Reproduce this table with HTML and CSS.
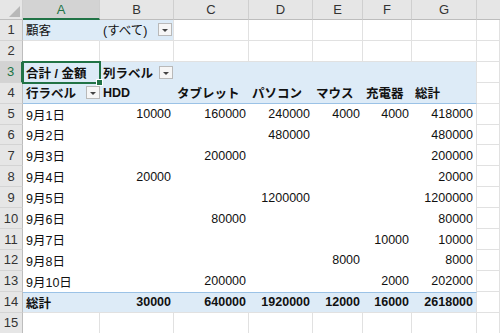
FILE: index.html
```html
<!DOCTYPE html>
<html lang="ja">
<head>
<meta charset="utf-8">
<link rel="stylesheet" href="styles.css">
</head>
<body>
<div class="sheet">
  <!-- column headers -->
  <div class="h corner"><svg width="11" height="11" viewBox="0 0 11 11"><polygon points="11,0 11,11 0,11" fill="#b8b8b8"/></svg></div>
  <div class="h sel">A</div>
  <div class="h">B</div>
  <div class="h">C</div>
  <div class="h">D</div>
  <div class="h">E</div>
  <div class="h">F</div>
  <div class="h">G</div>
  <div class="h last"></div>

  <!-- row 1 -->
  <div class="r">1</div>
  <div class="c f1 nr">顧客</div>
  <div class="c f1"><span>(すべて)</span><span class="dd"></span></div>
  <div class="c"></div><div class="c"></div><div class="c"></div><div class="c"></div><div class="c"></div><div class="c"></div>

  <!-- row 2 -->
  <div class="r">2</div>
  <div class="c"></div><div class="c"></div><div class="c"></div><div class="c"></div><div class="c"></div><div class="c"></div><div class="c"></div><div class="c"></div>

  <!-- row 3 -->
  <div class="r sel">3</div>
  <div class="b k active">合計 / 金額</div>
  <div class="b k"><span>列ラベル</span><span class="dd"></span></div>
  <div class="b"></div><div class="b"></div><div class="b"></div><div class="b"></div>
  <div class="b e"></div>
  <div class="c"></div>

  <!-- row 4 -->
  <div class="r">4</div>
  <div class="b k line"><span>行ラベル</span><span class="dd end"></span></div>
  <div class="b k line">HDD</div>
  <div class="b k line">タブレット</div>
  <div class="b k line">パソコン</div>
  <div class="b k line">マウス</div>
  <div class="b k line">充電器</div>
  <div class="b k line e">総計</div>
  <div class="c"></div>

  <!-- row 5 -->
  <div class="r">5</div>
  <div class="p">9月1日</div>
  <div class="p n">10000</div>
  <div class="p n">160000</div>
  <div class="p n">240000</div>
  <div class="p n">4000</div>
  <div class="p n">4000</div>
  <div class="p n e">418000</div>
  <div class="c"></div>

  <!-- row 6 -->
  <div class="r">6</div>
  <div class="p">9月2日</div>
  <div class="p"></div>
  <div class="p"></div>
  <div class="p n">480000</div>
  <div class="p"></div>
  <div class="p"></div>
  <div class="p n e">480000</div>
  <div class="c"></div>

  <!-- row 7 -->
  <div class="r">7</div>
  <div class="p">9月3日</div>
  <div class="p"></div>
  <div class="p n">200000</div>
  <div class="p"></div>
  <div class="p"></div>
  <div class="p"></div>
  <div class="p n e">200000</div>
  <div class="c"></div>

  <!-- row 8 -->
  <div class="r">8</div>
  <div class="p">9月4日</div>
  <div class="p n">20000</div>
  <div class="p"></div>
  <div class="p"></div>
  <div class="p"></div>
  <div class="p"></div>
  <div class="p n e">20000</div>
  <div class="c"></div>

  <!-- row 9 -->
  <div class="r">9</div>
  <div class="p">9月5日</div>
  <div class="p"></div>
  <div class="p"></div>
  <div class="p n">1200000</div>
  <div class="p"></div>
  <div class="p"></div>
  <div class="p n e">1200000</div>
  <div class="c"></div>

  <!-- row 10 -->
  <div class="r">10</div>
  <div class="p">9月6日</div>
  <div class="p"></div>
  <div class="p n">80000</div>
  <div class="p"></div>
  <div class="p"></div>
  <div class="p"></div>
  <div class="p n e">80000</div>
  <div class="c"></div>

  <!-- row 11 -->
  <div class="r">11</div>
  <div class="p">9月7日</div>
  <div class="p"></div>
  <div class="p"></div>
  <div class="p"></div>
  <div class="p"></div>
  <div class="p n">10000</div>
  <div class="p n e">10000</div>
  <div class="c"></div>

  <!-- row 12 -->
  <div class="r">12</div>
  <div class="p">9月8日</div>
  <div class="p"></div>
  <div class="p"></div>
  <div class="p"></div>
  <div class="p n">8000</div>
  <div class="p"></div>
  <div class="p n e">8000</div>
  <div class="c"></div>

  <!-- row 13 -->
  <div class="r">13</div>
  <div class="p">9月10日</div>
  <div class="p"></div>
  <div class="p n">200000</div>
  <div class="p"></div>
  <div class="p"></div>
  <div class="p n">2000</div>
  <div class="p n e">202000</div>
  <div class="c"></div>

  <!-- row 14 -->
  <div class="r">14</div>
  <div class="t k">総計</div>
  <div class="t k n">30000</div>
  <div class="t k n">640000</div>
  <div class="t k n">1920000</div>
  <div class="t k n">12000</div>
  <div class="t k n">16000</div>
  <div class="t k n e">2618000</div>
  <div class="c"></div>

  <!-- row 15 -->
  <div class="r">15</div>
  <div class="c"></div><div class="c"></div><div class="c"></div><div class="c"></div><div class="c"></div><div class="c"></div><div class="c"></div><div class="c"></div>
</div>
</body>
</html>
```
FILE: styles.css
```css
html, body {
  margin: 0;
  padding: 0;
  background: #ffffff;
  overflow: hidden;
}

.sheet {
  display: grid;
  grid-template-columns: 23px 77px 74px 75px 64px 50px 49px 65px 23px;
  grid-template-rows: 20px repeat(15, 20.92px);
  width: 500px;
  height: 333px;
  font-family: "Liberation Sans", "Noto Sans CJK JP", sans-serif;
  font-size: 12.5px;
  color: #111111;
  overflow: hidden;
}

.sheet > div {
  box-sizing: border-box;
  display: flex;
  align-items: center;
  white-space: nowrap;
  overflow: visible;
  min-width: 0;
}

/* column headers */
.h {
  background: #e6e6e6;
  border-right: 1px solid #cfcfcf;
  border-bottom: 1px solid #bdbdbd;
  justify-content: center;
  color: #333333;
  font-size: 13px;
}
.h.corner {
  align-items: flex-end;
  justify-content: flex-end;
  padding: 0 2px 2px 0;
}
.h.sel {
  background: #d3d3d3;
  color: #217346;
  border-bottom: 2px solid #217346;
}
.h.last {
  border-right: none;
}

/* row headers */
.r {
  background: #e6e6e6;
  border-right: 1px solid #bdbdbd;
  border-bottom: 1px solid #d4d4d4;
  justify-content: center;
  color: #333333;
  font-size: 13px;
}
.r.sel {
  background: #d3d3d3;
  color: #217346;
  border-right: 2px solid #217346;
}

/* normal cells */
.c {
  border-right: 1px solid #e1e1e1;
  border-bottom: 1px solid #e1e1e1;
  padding: 0 3px;
}
.c.f1 {
  background: #ddebf7;
  justify-content: space-between;
  padding: 0 1px 0 3px;
}
.c.nr {
  border-right-color: #ddebf7;
}

/* pivot header (blue) */
.b {
  background: #ddebf7;
  padding: 0 3px;
  justify-content: space-between;
}
.b.line {
  border-bottom: 1px solid #9bc2e6;
}
.b .dd {
  margin-right: -2px;
}
.b .dd.end {
  margin-right: -3px;
}

/* pivot body */
.p {
  background: #ffffff;
  padding: 0 3px;
}

/* total row */
.t {
  background: #ddebf7;
  border-top: 1px solid #9bc2e6;
  border-bottom: 1px solid #e1e1e1;
  padding: 0 3px;
}

.e {
  border-right: 1px solid #e1e1e1;
}

.n {
  justify-content: flex-end;
}

.k {
  font-weight: bold;
}

/* dropdown button */
.dd {
  display: inline-flex;
  align-items: center;
  justify-content: center;
  box-sizing: border-box;
  width: 14px;
  height: 13px;
  background: #f6f6f6;
  border: 1px solid #b9b9b9;
  flex: none;
}
.dd::after {
  content: "";
  width: 0;
  height: 0;
  border-left: 3px solid transparent;
  border-right: 3px solid transparent;
  border-top: 3px solid #444444;
  margin-top: 2px;
}

/* active cell selection */
.active {
  position: relative;
}
.active::after {
  content: "";
  position: absolute;
  left: -1px;
  top: -1px;
  right: -1px;
  bottom: -1px;
  border: 2px solid #217346;
  pointer-events: none;
}
.active::before {
  content: "";
  position: absolute;
  right: -3px;
  bottom: -3px;
  width: 5px;
  height: 5px;
  background: #217346;
  border: 1px solid #ffffff;
  z-index: 2;
}
```
